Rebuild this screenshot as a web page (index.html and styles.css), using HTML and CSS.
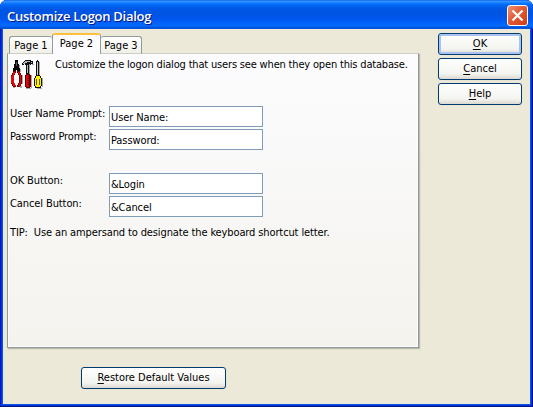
FILE: index.html
```html
<!DOCTYPE html>
<html lang="en">
<head>
<meta charset="utf-8">
<title>Customize Logon Dialog</title>
<link rel="stylesheet" href="styles.css">
</head>
<body>
<main class="window">
  <header class="titlebar">
    <h1>Customize Logon Dialog</h1>
    <button class="close" aria-label="Close"><svg width="13" height="13" viewBox="0 0 13 13"><path d="M1.5 1.5l10 10M11.5 1.5l-10 10" stroke="#fff" stroke-width="2.2"/></svg></button>
  </header>
  <div class="client">
    <section class="left">
      <nav class="tabs">
        <span class="tab first">Page 1</span><span class="tab active">Page 2</span><span class="tab last">Page 3</span>
      </nav>
      <div class="panel">
        <div class="intro">
          <svg class="tools" width="34" height="33" viewBox="0 0 34 33" shape-rendering="crispEdges">
            <path d="M8 6h1v4h1v3H8zM2 27h2v2H2zM11 16h1v9h-1zM9 27h2v2H9zM15 29h5v1h-5zM20 16h1v13h-1zM28 3h1v14h-1zM31 19h1v9h-1zM26 29h5v1h-5zM18 5h1v10h-1zM21 5h2v1h-2z" fill="#aaa"/>
            <path d="M4 1h3v4h1v4h1v4H6v-2H5v2H2V9h1V5h1z" fill="#080808"/>
            <path d="M5 3h1v4H5z" fill="#555"/>
            <path d="M2 12h3v2H4v2H3v8h1v2h1v2H2v-1H1v-2H0v-9h1v-2h1zM6 12h3v2h1v2h1v9h-1v2H9v1H6v-2h1v-2h1v-8H7v-2H6z" fill="#700"/>
            <path d="M2 13h2v2H3v9h1v2h1v1H2v-2H1v-9h1zM7 13h1v1h1v2h1v9H9v2H7v-1h1v-2h1v-8H8v-2H7zM0 17h1v7H0z" fill="#e00a0a"/>
            <path d="M14 1h6v1h2v3h-2v1h-1v-1h-1v10h-3V6h-1V5h-1v1h-2V4h1V3h1V2h1z" fill="#111"/>
            <path d="M14 2h5v1h-5zM13 3h3v1h-3zM12 4h2v1h-2zM16 6h1v8h-1zM20 3h1v1h-1z" fill="#bbb"/>
            <path d="M15 15h4v1h1v12h-1v1h-4v-1h-1V16h1z" fill="#600"/>
            <path d="M15 16h3v12h-3z" fill="#d80808"/>
            <path d="M17 17h1v1h-1zM17 19h1v1h-1zM17 21h1v1h-1zM17 23h1v1h-1zM17 25h1v1h-1z" fill="#700"/>
            <path d="M26 1h1v1h1v15h-3V2h1z" fill="#111"/>
            <path d="M26 3h1v14h-1z" fill="#ccc"/>
            <path d="M25 16h4v1h1v2h1v8h-1v2h-6v-2h-1v-8h1v-2h1z" fill="#111"/>
            <path d="M25 17h4v2h1v8h-1v1h-4v-1h-1v-8h1z" fill="#ffef00"/>
            <path d="M25 20h1v6h-1zM28 20h1v6h-1z" fill="#665f00"/>
          </svg>
          <p class="desc">Customize the logon dialog that users see when they open this database.</p>
        </div>
        <div class="fields">
          <div class="row"><label>User Name Prompt:</label><div class="box"><span>User Name:</span></div></div>
          <div class="row"><label>Password Prompt:</label><div class="box"><span>Password:</span></div></div>
        </div>
        <div class="fields second">
          <div class="row"><label>OK Button:</label><div class="box"><span>&amp;Login</span></div></div>
          <div class="row"><label>Cancel Button:</label><div class="box"><span>&amp;Cancel</span></div></div>
        </div>
        <p class="tip">TIP:&nbsp; Use an ampersand to designate the keyboard shortcut letter.</p>
      </div>
      <button class="btn restore"><span><u>R</u>estore Default Values</span></button>
    </section>
    <aside class="actions">
      <button class="btn default"><span><u>O</u>K</span></button>
      <button class="btn"><span><u>C</u>ancel</span></button>
      <button class="btn"><span><u>H</u>elp</span></button>
    </aside>
  </div>
</main>
</body>
</html>
```
FILE: styles.css
```css
* { box-sizing: border-box; }
body { margin: 0; background: #fff; font: 11px/14px "DejaVu Sans Condensed", "DejaVu Sans", sans-serif; font-stretch: condensed; color: #000; white-space: nowrap; overflow: hidden; }
h1, p { margin: 0; }
.window { width: 533px; height: 407px; border-radius: 7px 7px 0 0; overflow: hidden; display: flex; flex-direction: column; background: #0831d9; box-shadow: inset 0 -1px #00138c, inset -1px 0 #00138c, inset 1px 0 #0019cf; }
.titlebar { height: 29px; flex: none; display: flex; align-items: flex-start; justify-content: space-between; padding: 5px 5px 0 7px; background: linear-gradient(#0058e6 0, #3a93ff 1px, #288eff 2px, #127dff 3px, #036ffc 4px, #0262ee 6px, #0057e5 9px, #0054e3 14px, #0055eb 18px, #005bf5 21px, #026afe 25px, #0062ef 27px, #0045c8 28px, #003db4 29px); }
h1 { font: 600 13px/22px "Open Sans", sans-serif; color: #fff; text-shadow: 1px 1px #0a1883; letter-spacing: -.28px; }
.close { width: 21px; height: 21px; padding: 0; display: grid; place-items: center; border: 1px solid #fff; border-radius: 3px; background: linear-gradient(135deg, #ee9278, #e35a34 45%, #cf3d16); }
.client { flex: 1; margin: 0 3px 3px; background: #ece9d8; display: flex; box-shadow: 0 0 0 1px #0855dd; }
.left { width: 435px; padding: 4px 0 0 4px; }
.tabs { height: 21px; display: flex; align-items: flex-end; padding-left: 2px; position: relative; z-index: 1; }
.tab { height: 18px; border: 1px solid #919b9c; border-bottom-color: #d0cebf; border-radius: 3px 3px 0 0; background: linear-gradient(#fff, #f0f0ea); text-align: center; line-height: 17px; }
.first { width: 43px; border-right: 0; }
.active { width: 49px; height: 21px; border-top: 2px solid #ffc03c; border-bottom: 0; line-height: 18px; background: #fcfcfe; }
.last { width: 41px; border-left: 0; }
.panel { width: 412px; height: 295px; margin-top: -1px; border: 1px solid #919b9c; border-top-color: #d0cebf; padding: 4px 2px 0; background: linear-gradient(#fcfcfe, #f4f3ee); box-shadow: inset 0 0 0 1px #fcfcfe, 1px 1px 1px #bdb9a7; }
.intro { display: flex; height: 48px; }
.tools { flex: none; margin: 1px 0 0 1px; }
.desc { margin-left: 10px; letter-spacing: -.175px; }
.row { display: flex; height: 23px; }
.row label { width: 99px; padding-top: 1px; letter-spacing: -.1px; }
.box { width: 154px; height: 21px; border: 1px solid #7f9db9; background: #fff; padding: 4px 0 0 1px; letter-spacing: -.1px; }
.second { margin-top: 21px; }
.tip { margin-top: 7px; letter-spacing: -.12px; }
.btn { display: flex; align-items: center; justify-content: center; width: 84px; height: 22px; padding: 0 0 1px; border: 1px solid #003c74; border-radius: 3px; background: linear-gradient(#fff, #f3f3ef 75%, #dcd8cf); font: inherit; color: #000; box-shadow: 0 0 0 1px #e8e5d5; }
.default { box-shadow: inset 0 0 0 2px #a9c2f0; }
.restore { width: 145px; margin: 19px 0 0 74px; }
.actions { padding-top: 4px; display: grid; gap: 3px; align-content: start; }
u { text-underline-offset: 2px; text-decoration-thickness: 1px; text-decoration-skip-ink: none; }
```
